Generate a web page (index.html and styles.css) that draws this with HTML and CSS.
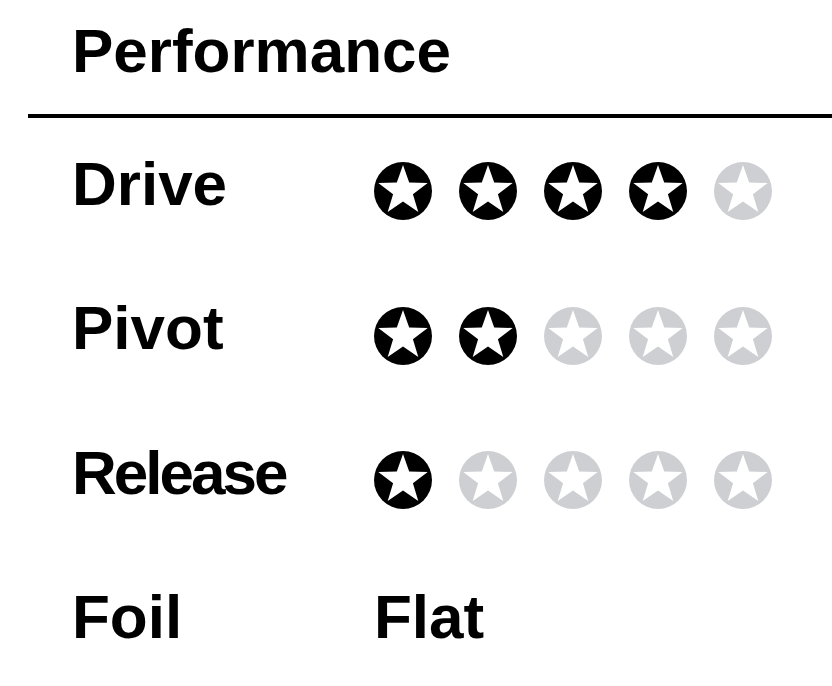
FILE: index.html
```html
<!DOCTYPE html>
<html lang="en">
<head>
    <meta charset="UTF-8">
    <meta name="viewport" content="width=device-width, initial-scale=1.0">
    <title>Performance</title>
    <link rel="stylesheet" href="styles.css">
</head>
<body>
    <svg class="defs" width="0" height="0" aria-hidden="true">
        <symbol id="star" viewBox="0 0 58 58">
            <circle cx="29" cy="29" r="29"/>
            <polygon fill="#fff" points="29,3 35.2,20.5 53.7,21 38.9,32.2 44.3,50 29,39.5 13.7,50 19.1,32.2 4.3,21 22.8,20.5"/>
        </symbol>
    </svg>
    <div class="panel">
        <h1 class="panel-title">Performance</h1>
        <div class="rows">
            <div class="row">
                <div class="label">Drive</div>
                <div class="stars">
                    <svg class="star on"><use href="#star"/></svg>
                    <svg class="star on"><use href="#star"/></svg>
                    <svg class="star on"><use href="#star"/></svg>
                    <svg class="star on"><use href="#star"/></svg>
                    <svg class="star"><use href="#star"/></svg>
                </div>
            </div>
            <div class="row">
                <div class="label">Pivot</div>
                <div class="stars">
                    <svg class="star on"><use href="#star"/></svg>
                    <svg class="star on"><use href="#star"/></svg>
                    <svg class="star"><use href="#star"/></svg>
                    <svg class="star"><use href="#star"/></svg>
                    <svg class="star"><use href="#star"/></svg>
                </div>
            </div>
            <div class="row">
                <div class="label label-tight">Release</div>
                <div class="stars">
                    <svg class="star on"><use href="#star"/></svg>
                    <svg class="star"><use href="#star"/></svg>
                    <svg class="star"><use href="#star"/></svg>
                    <svg class="star"><use href="#star"/></svg>
                    <svg class="star"><use href="#star"/></svg>
                </div>
            </div>
            <div class="row">
                <div class="label">Foil</div>
                <div class="value">Flat</div>
            </div>
        </div>
    </div>
</body>
</html>
```

FILE: styles.css
```css
body {
    margin: 0;
    background-color: #fff;
    color: #000;
    font-family: "Liberation Sans", Arial, sans-serif;
    font-weight: bold;
}
.defs {
    position: absolute;
}
.panel {
    padding-left: 28px;
}
.panel-title {
    margin: 0;
    padding: 20px 0 32px 44px;
    font-size: 62px;
    line-height: 62px;
    border-bottom: 4px solid #000;
}
.rows {
    padding-left: 44px;
    padding-top: 1px;
}
.row {
    display: flex;
    align-items: center;
    height: 144.5px;
}
.label,
.value {
    font-size: 62px;
    line-height: 62px;
    padding-bottom: 15px;
}
.label {
    width: 302px;
    flex-shrink: 0;
}
.label-tight {
    letter-spacing: -3px;
}
.stars {
    display: flex;
    gap: 27px;
}
.star {
    width: 58px;
    height: 58px;
    fill: #cdcfd2;
}
.star.on {
    fill: #000;
}
```
